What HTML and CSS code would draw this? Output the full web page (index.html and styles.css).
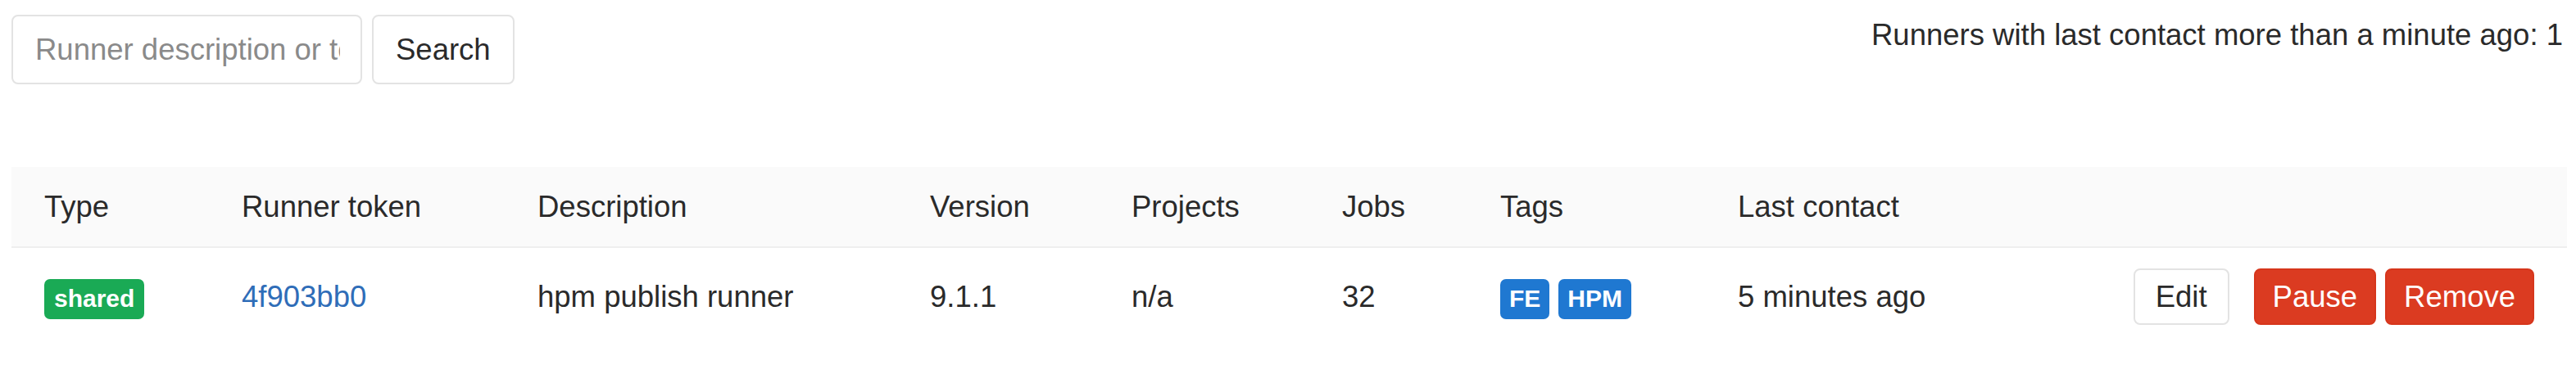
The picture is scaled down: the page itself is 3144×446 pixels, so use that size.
FILE: index.html
```html
<!DOCTYPE html>
<html>
<head>
<meta charset="utf-8">
<link rel="stylesheet" href="styles.css">
</head>
<body>
<div class="page">
  <div class="topbar">
    <form class="search-form">
      <input class="search-input" type="text" placeholder="Runner description or token">
      <button type="button" class="btn btn-default">Search</button>
    </form>
    <div class="summary">Runners with last contact more than a minute ago: 1</div>
  </div>
  <table class="runners">
    <colgroup>
      <col class="c-type"><col class="c-token"><col class="c-desc"><col class="c-ver"><col class="c-proj"><col class="c-jobs"><col class="c-tags"><col class="c-last"><col class="c-actions">
    </colgroup>
    <thead>
      <tr>
        <th>Type</th>
        <th>Runner token</th>
        <th>Description</th>
        <th>Version</th>
        <th>Projects</th>
        <th>Jobs</th>
        <th>Tags</th>
        <th>Last contact</th>
        <th></th>
      </tr>
    </thead>
    <tbody>
      <tr>
        <td><span class="label label-success">shared</span></td>
        <td><a class="token" href="#">4f903bb0</a></td>
        <td>hpm publish runner</td>
        <td>9.1.1</td>
        <td>n/a</td>
        <td>32</td>
        <td><span class="tags"><span class="label label-primary">FE</span><span class="label label-primary">HPM</span></span></td>
        <td>5 minutes ago</td>
        <td>
          <div class="actions">
            <a class="btn btn-default btn-edit" href="#">Edit</a>
            <span class="danger-group">
              <a class="btn btn-danger" href="#">Pause</a>
              <a class="btn btn-danger" href="#">Remove</a>
            </span>
          </div>
        </td>
      </tr>
    </tbody>
  </table>
</div>
</body>
</html>
```

FILE: styles.css
```css
html, body {
  margin: 0;
  padding: 0;
  background: #ffffff;
}

body {
  font-family: "Liberation Sans", Arial, Helvetica, sans-serif;
  font-size: 36.5px;
  color: #2a2a2a;
}

.page {
  padding: 18px 11px 0 14px;
}

.topbar {
  display: flex;
  justify-content: space-between;
  align-items: flex-start;
}

.search-form {
  display: flex;
  gap: 12px;
  margin: 0;
}

.search-input {
  box-sizing: border-box;
  width: 428px;
  height: 85px;
  padding: 0 25px 0 27px;
  border: 2px solid #e3e3e3;
  border-radius: 8px;
  font-family: inherit;
  font-size: 36.5px;
  color: #2e2e2e;
  outline: none;
}

.search-input::placeholder {
  color: #8a8a8a;
}

.btn {
  box-sizing: border-box;
  display: inline-flex;
  align-items: center;
  justify-content: center;
  height: 85px;
  padding: 0 27px;
  border: 2px solid #e3e3e3;
  border-radius: 8px;
  background: #ffffff;
  color: #2a2a2a;
  font-family: inherit;
  font-size: 36.5px;
  text-decoration: none;
  cursor: pointer;
}

.summary {
  line-height: 50px;
  padding-right: 5px;
}

.runners {
  width: 100%;
  margin-top: 101px;
  border-collapse: collapse;
  table-layout: fixed;
}

.c-type { width: 241px; }
.c-token { width: 361px; }
.c-desc { width: 479px; }
.c-ver { width: 246px; }
.c-proj { width: 257px; }
.c-jobs { width: 193px; }
.c-tags { width: 290px; }
.c-last { width: 450px; }

.runners th {
  background: #fafafa;
  font-weight: normal;
  text-align: left;
  padding: 30px 40px;
  line-height: 37px;
  border-bottom: 2px solid #efefef;
  white-space: nowrap;
}

.runners td {
  padding: 25px 40px;
  line-height: 69px;
  height: 69px;
  vertical-align: middle;
  white-space: nowrap;
}

.label {
  display: inline-flex;
  align-items: center;
  box-sizing: border-box;
  height: 49px;
  padding: 0 11px;
  border-radius: 7px;
  color: #ffffff;
  font-size: 30px;
  font-weight: bold;
  line-height: 1;
  vertical-align: middle;
}

.label-success {
  background: #1aaa55;
  padding: 0 12px;
}

.label-primary {
  background: #1f78d1;
}

.tags {
  display: inline-flex;
  gap: 11px;
  vertical-align: middle;
}

.token {
  color: #2f6db8;
  text-decoration: none;
}

.actions {
  display: flex;
  justify-content: flex-end;
  align-items: center;
  gap: 30px;
}

.danger-group {
  display: flex;
  gap: 11px;
}

.actions .btn {
  height: 69px;
  padding: 0 21px;
}

.actions .btn-edit {
  padding: 0 25px;
}

.btn-danger {
  background: #db3b21;
  border-color: #d6361c;
  color: #ffffff;
}
```
